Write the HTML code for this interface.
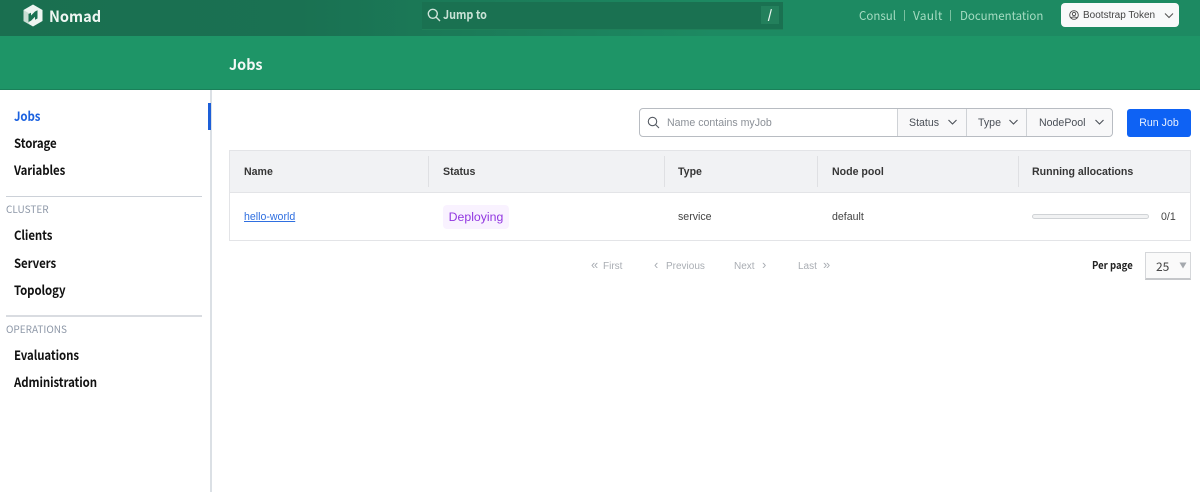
<!DOCTYPE html>
<html><head><meta charset="utf-8">
<style>
html,body{margin:0;padding:0;width:1200px;height:492px;overflow:hidden;background:#fff}
body{position:relative;font-family:"Liberation Sans",sans-serif;color:#363636}
.a{position:absolute;white-space:nowrap}
.n{font-family:"Noto Sans CJK JP","Liberation Sans",sans-serif}
.side{font-family:"Noto Sans CJK JP","Liberation Sans",sans-serif;font-weight:700;font-size:13px;color:#111;left:14px;line-height:20px;letter-spacing:-.1px;transform:scaleX(.88);transform-origin:0 50%}
.lab{font-family:"Noto Sans CJK JP","Liberation Sans",sans-serif;font-size:10px;color:#8e98a8;left:6px;line-height:14px}
.th{font-size:10.6px;font-weight:bold;color:#363636;top:164px;line-height:16px}
.td{font-size:10.6px;color:#444;top:209px;line-height:16px}
.sep{width:1px;background:#dfe0e3;top:156px;height:31px}
.pg{font-size:10px;color:#a9adb3;top:260px;line-height:14px}
.pi{font-size:13px;color:#a9adb3;top:258px;line-height:14px}
.f{font-size:10.6px;color:#4a4f57;line-height:16px;top:115px}
</style></head><body>
<div class="a" style="left:0;top:0;width:1200px;height:36px;background:linear-gradient(90deg,#1a6f50 0,#1a7152 25%,#1d8a62 60%,#1d8a62 100%)"></div>
<div class="a" style="left:0;top:36px;width:1200px;height:54px;background:#1e9567"></div>
<div class="a" style="left:0;top:89px;width:1200px;height:1px;background:#1a8059"></div>

<svg class="a" style="left:22px;top:4px" width="22" height="23" viewBox="0 0 22 23">
<path d="M11 .5 20.500 6v11L11 22.500 1.500 17V6z" fill="#eef5f1"/>
<path d="M1.500 6v11L7 20.200V9.200z" fill="#c9ddd3"/>
<path d="M6.500 10 9 8.800v2.700L13 7.500l2.500-1.200v8.200l-2.500 1.300v-3L9 16.800l-2.500 1.200z" fill="#1a7152"/>
</svg>
<div class="a n" style="left:49px;top:5px;font-size:15.500px;font-weight:700;line-height:22px;color:#eef6f2;transform:scaleX(.94);transform-origin:0 50%">Nomad</div>

<div class="a" style="left:422px;top:2px;width:361px;height:27px;background:#1a7151;border-bottom:1px solid #1f8059"></div>
<svg class="a" style="left:427px;top:8px" width="14" height="14" viewBox="0 0 14 14" fill="none" stroke="#cfe4da" stroke-width="1.400"><circle cx="5.800" cy="5.800" r="4.500"/><path d="M9 9l4 4"/></svg>
<div class="a n" style="left:443px;top:6px;font-size:12px;font-weight:700;color:#c9e2d6;line-height:18px;transform:scaleX(.9);transform-origin:0 50%">Jump to</div>
<div class="a n" style="left:761px;top:6px;width:18px;height:18px;background:#23805c;color:#eef6f2;font-size:12px;font-weight:700;line-height:18px;text-align:center">/</div>

<div class="a n" style="left:859px;top:6px;font-size:12px;color:#a5dcc2;line-height:19px;transform:scaleX(.96);transform-origin:0 50%">Consul</div>
<div class="a" style="left:904px;top:10px;width:1px;height:11px;background:#79c0a0"></div>
<div class="a n" style="left:913px;top:6px;font-size:12px;color:#a5dcc2;line-height:19px;letter-spacing:.2px">Vault</div>
<div class="a" style="left:950px;top:10px;width:1px;height:11px;background:#79c0a0"></div>
<div class="a n" style="left:960px;top:6px;font-size:12px;color:#a5dcc2;line-height:19px;transform:scaleX(.955);transform-origin:0 50%">Documentation</div>

<div class="a" style="left:1061px;top:3px;width:118px;height:24px;background:#f8f9fa;border-radius:4px"></div>
<svg class="a" style="left:1069px;top:10px" width="10" height="10" viewBox="0 0 10 10" fill="none" stroke="#444" stroke-width=".9"><circle cx="5" cy="5" r="4.300"/><circle cx="5" cy="4" r="1.700"/><path d="M2.200 8c.6-1.400 4.900-1.400 5.600 0"/></svg>
<div class="a" style="left:1083px;top:9px;font-size:10px;color:#444;line-height:14px">Bootstrap Token</div>
<svg class="a" style="left:1163px;top:12px" width="12" height="8" viewBox="0 0 12 8" fill="none" stroke="#555" stroke-width="1.100"><path d="M2 1.500 6 5.500 10 1.500"/></svg>

<div class="a n" style="left:229px;top:55px;font-size:15px;font-weight:700;color:#f2f8f5;line-height:20px;transform:scaleX(.96);transform-origin:0 50%">Jobs</div>

<div class="a" style="left:210px;top:90px;width:2px;height:402px;background:#dbe0e5"></div>
<div class="a" style="left:208px;top:103px;width:3px;height:27px;background:#1d5fd8"></div>

<div class="a side" style="top:106px;color:#1c62e0">Jobs</div>
<div class="a side" style="top:133px">Storage</div>
<div class="a side" style="top:160px">Variables</div>
<div class="a" style="left:6px;top:196px;width:196px;height:1px;background:#ccd1d8"></div>
<div class="a lab" style="top:202px">CLUSTER</div>
<div class="a side" style="top:225px">Clients</div>
<div class="a side" style="top:253px">Servers</div>
<div class="a side" style="top:280px">Topology</div>
<div class="a" style="left:6px;top:315px;width:196px;height:2px;background:#d9dce1"></div>
<div class="a lab" style="top:322px">OPERATIONS</div>
<div class="a side" style="top:345px">Evaluations</div>
<div class="a side" style="top:372px">Administration</div>

<div class="a" style="left:639px;top:108px;width:472px;height:27px;border:1px solid #b8bcc2;border-radius:4px;background:#fff"></div>
<div class="a" style="left:897px;top:109px;width:215px;height:27px;background:#f8f8f9;border-radius:0 4px 4px 0"></div>
<div class="a" style="left:897px;top:109px;width:1px;height:27px;background:#cfd2d6"></div>
<div class="a" style="left:966px;top:109px;width:1px;height:27px;background:#cfd2d6"></div>
<div class="a" style="left:1026px;top:109px;width:1px;height:27px;background:#cfd2d6"></div>
<svg class="a" style="left:647px;top:116px" width="13" height="13" viewBox="0 0 13 13" fill="none" stroke="#555b63" stroke-width="1.100"><circle cx="5.500" cy="5.500" r="4.200"/><path d="M8.600 8.600l3.400 3.400"/></svg>
<div class="a f" style="left:667px;color:#8b9097">Name contains myJob</div>
<div class="a f" style="left:909px">Status</div>
<svg class="a" style="left:947px;top:119px" width="11" height="7" viewBox="0 0 11 7" fill="none" stroke="#4a4f57" stroke-width="1.100"><path d="M1.500 1 5.500 5 9.500 1"/></svg>
<div class="a f" style="left:978px">Type</div>
<svg class="a" style="left:1008px;top:119px" width="11" height="7" viewBox="0 0 11 7" fill="none" stroke="#4a4f57" stroke-width="1.100"><path d="M1.500 1 5.500 5 9.500 1"/></svg>
<div class="a f" style="left:1039px">NodePool</div>
<svg class="a" style="left:1094px;top:119px" width="11" height="7" viewBox="0 0 11 7" fill="none" stroke="#4a4f57" stroke-width="1.100"><path d="M1.500 1 5.500 5 9.500 1"/></svg>
<div class="a" style="left:1127px;top:109px;width:64px;height:28px;background:#0e62f4;border-radius:3px;color:#e8f0ff;font-size:10.6px;line-height:28px;text-align:center">Run Job</div>

<div class="a" style="left:229px;top:150px;width:960px;height:89px;border:1px solid #e3e4e7;background:#fff"></div>
<div class="a" style="left:230px;top:151px;width:960px;height:41px;background:#f1f2f4;border-bottom:1px solid #e3e4e7"></div>
<div class="a sep" style="left:428px"></div>
<div class="a sep" style="left:664px"></div>
<div class="a sep" style="left:817px"></div>
<div class="a sep" style="left:1018px"></div>
<div class="a th" style="left:244px">Name</div>
<div class="a th" style="left:443px">Status</div>
<div class="a th" style="left:678px">Type</div>
<div class="a th" style="left:832px">Node pool</div>
<div class="a th" style="left:1032px">Running allocations</div>

<div class="a td" style="left:244px;color:#2f6fe0;text-decoration:underline">hello-world</div>
<div class="a" style="left:443px;top:205px;width:66px;height:24px;background:#f9f2ff;border-radius:4px;color:#9136e0;font-size:12.300px;line-height:24px;text-align:center">Deploying</div>
<div class="a td" style="left:678px">service</div>
<div class="a td" style="left:832px">default</div>
<div class="a" style="left:1032px;top:214px;width:115px;height:3px;border:1px solid #d0d3d6;border-radius:3px;background:#f1f2f3"></div>
<div class="a td" style="left:1161px">0/1</div>

<div class="a pi" style="left:591px">«</div><div class="a pg" style="left:603px">First</div>
<div class="a pi" style="left:654px">‹</div><div class="a pg" style="left:666px">Previous</div>
<div class="a pg" style="left:734px">Next</div><div class="a pi" style="left:762px">›</div>
<div class="a pg" style="left:798px">Last</div><div class="a pi" style="left:823px">»</div>
<div class="a n" style="left:1092px;top:258px;font-size:10.500px;font-weight:700;color:#222;line-height:16px;transform:scaleX(.91);transform-origin:0 50%">Per page</div>
<div class="a" style="left:1145px;top:252px;width:44px;height:25px;border:1px solid #d5d7da;border-bottom:2px solid #c5c7ca;background:#fafafa"></div>
<div class="a n" style="left:1156px;top:258px;font-size:12px;color:#444;line-height:17px">25</div>
<svg class="a" style="left:1179px;top:262px" width="8" height="7" viewBox="0 0 8 7"><path d="M.5 .5h7L4 6.500z" fill="#a4a8ad"/></svg>
</body></html>
